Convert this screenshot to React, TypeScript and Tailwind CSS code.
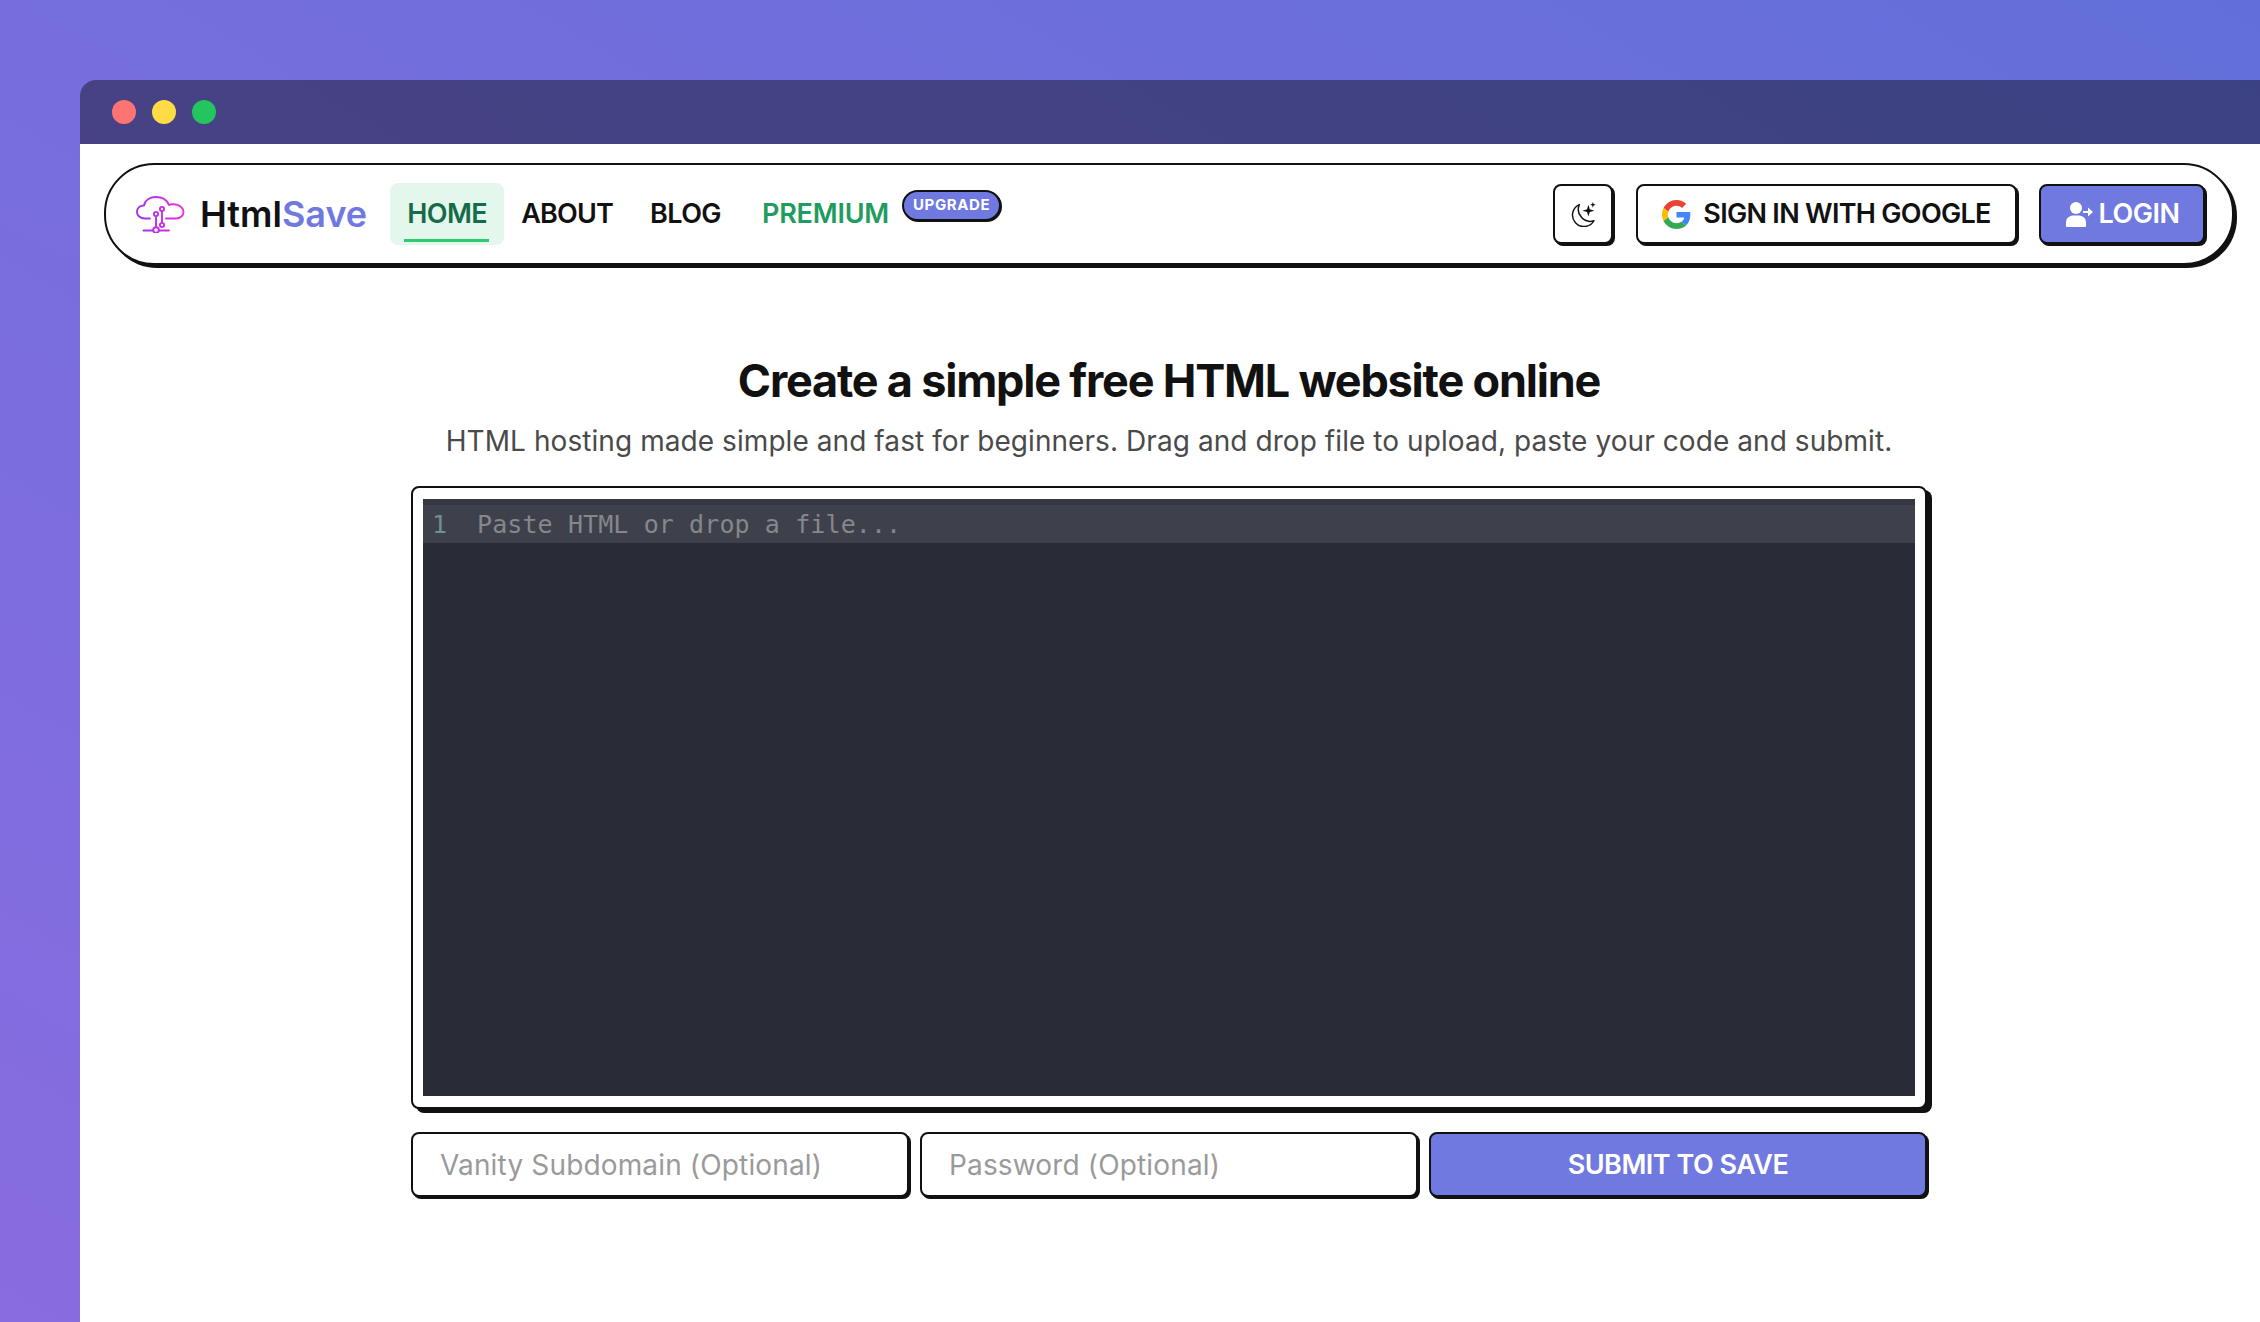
import React from "react";

const sans = "font-['Inter','Noto_Sans',sans-serif]";

const Logo = () => (
  <svg width="49" height="37" viewBox="0 0 49 37" fill="none" strokeWidth="1.9">
    <defs>
      <linearGradient id="logoGrad" x1="0" y1="0" x2="49" y2="0" gradientUnits="userSpaceOnUse">
        <stop offset="0" stopColor="#9b30f0" />
        <stop offset="1" stopColor="#f02fd8" />
      </linearGradient>
    </defs>
    <g stroke="url(#logoGrad)" strokeLinecap="round" strokeLinejoin="round">
      <path d="M14 22.500H9C4 22.500 1 19.500 1 16C1 12 4 9.500 8 9.500C9 4 14 1 20 1C26 1 31 4 33 9C35 8 36 8 38 8.300C43.500 8.500 47.500 12 47.500 16C47.500 19.500 44.500 22.500 40 22.500H30" />
      <path d="M20 20V31M26 15V27" />
      <circle cx="20" cy="18" r="2.100" fill="white" />
      <circle cx="26" cy="13" r="2.100" fill="white" />
      <circle cx="26" cy="29" r="2.100" fill="white" />
      <circle cx="20" cy="34" r="2.800" fill="white" />
      <path d="M7.500 34.500H17M23 34.500H33" />
    </g>
  </svg>
);

const MoonStars = () => (
  <svg width="25" height="25" viewBox="0 0 24 24" fill="none" stroke="#111" strokeWidth="1.4" strokeLinejoin="round">
    <path d="M8 2.500A11 11 0 1 0 22 18A11.500 11.500 0 0 1 8 2.500Z" />
    <path fill="#111" stroke="none" d="M16.700 2.600L18 7L22.400 8.300L18 9.600L16.700 14L15.400 9.600L11 8.300L15.400 7Z" />
    <path fill="#111" stroke="none" d="M21 0L21.700 2L23.700 2.700L21.700 3.400L21 5.400L20.300 3.400L18.300 2.700L20.300 2Z" />
  </svg>
);

const GoogleG = () => (
  <svg width="29" height="29" viewBox="0 0 48 48">
    <path fill="#EA4335" d="M24 9.500c3.500 0 6.700 1.200 9.200 3.600l6.900-6.900C35.900 2.400 30.500 0 24 0 14.600 0 6.500 5.400 2.600 13.200l8 6.200C12.500 13.600 17.800 9.500 24 9.500z" />
    <path fill="#4285F4" d="M46.900 24.500c0-1.600-.1-3.100-.4-4.500H24v9h12.900c-.6 3-2.200 5.500-4.700 7.200l7.700 6c4.500-4.200 7-10.300 7-17.700z" />
    <path fill="#FBBC05" d="M10.500 28.600c-.5-1.400-.8-3-.8-4.600s.3-3.200.8-4.600l-8-6.200C.9 16.400 0 20.100 0 24s.9 7.600 2.600 10.800l7.900-6.200z" />
    <path fill="#34A853" d="M24 48c6.500 0 11.900-2.100 15.900-5.800l-7.700-6c-2.200 1.400-4.900 2.300-8.200 2.300-6.200 0-11.500-4.100-13.400-9.900l-8 6.200C6.500 42.600 14.600 48 24 48z" />
  </svg>
);

const UserArrow = () => (
  <svg width="28" height="25" viewBox="0 0 28 25" fill="white">
    <circle cx="11" cy="6" r="6" />
    <path d="M1 25V20.500C1 16 4.500 13.500 9 13.500H13C17.500 13.500 21 16 21 20.500V25Z" />
    <path d="M18 9H23V5.500L28 10L23 14.500V11H18Z" />
  </svg>
);

const Field = ({ placeholder, type = "text" }: { placeholder: string; type?: string }) => (
  <input
    type={type}
    placeholder={placeholder}
    className="h-full w-full rounded-lg border-2 border-[#111] bg-white px-[27px] text-[28px] tracking-[0.15px] text-[#111] shadow-[2px_2px_0_#111] outline-none placeholder:text-[#9a9a9a]"
  />
);

export default function App() {
  return (
    <div className={`h-screen overflow-hidden bg-linear-to-tr from-[#886ce0] to-[#626fda] pl-[80px] pt-[80px] ${sans}`}>
      <div className="flex h-full flex-col">
        {/* Window bar */}
        <div className="flex h-[64px] shrink-0 items-center gap-4 rounded-tl-2xl bg-black/40 pl-8">
          <span className="h-6 w-6 rounded-full bg-[#ff7373]" />
          <span className="h-6 w-6 rounded-full bg-[#ffdc45]" />
          <span className="h-6 w-6 rounded-full bg-[#22c55e]" />
        </div>

        <div className="flex-1 bg-white pl-6 pr-[26px] pt-[19px]">
          {/* Navbar */}
          <nav className="flex h-[102px] items-center justify-between rounded-[50px] border-2 border-[#111] bg-white pl-[30px] pr-[27px] shadow-[3px_3px_0_#111]">
            <div className="flex items-center">
              <Logo />
              <a className="ml-[15px] text-[36px] font-semibold text-[#111]">
                Html<span className="text-[#7079e0]">Save</span>
              </a>
              <a className="relative ml-[23px] flex h-[62px] w-[114px] items-center justify-center rounded-lg bg-[#e4f7ec] text-[27px] font-semibold tracking-[-0.6px] text-[#166b4a]">
                HOME
                <span className="absolute bottom-[3px] left-[14px] h-[3px] w-[85px] bg-[#2ecc71]" />
              </a>
              <a className="ml-[17px] text-[27px] font-semibold tracking-[-0.8px] text-[#111]">ABOUT</a>
              <a className="ml-[37px] text-[27px] font-semibold tracking-[-0.6px] text-[#111]">BLOG</a>
              <a className="ml-[41px] text-[27px] font-semibold tracking-[-0.2px] text-[#1f9d5f]">PREMIUM</a>
              <span className="mb-[17px] ml-[13px] flex h-[31px] w-[99px] items-center justify-center rounded-full border-2 border-[#111] bg-[#7079e0] text-[15px] font-bold tracking-[0.6px] text-white shadow-[1px_1px_0_#111]">
                UPGRADE
              </span>
            </div>

            <div className="flex items-center gap-[22px]">
              <button className="mr-[1px] flex h-[60px] w-[60px] items-center justify-center rounded-lg border-2 border-[#111] bg-white shadow-[2px_2px_0_#111]">
                <MoonStars />
              </button>
              <button className="flex h-[60px] w-[381px] items-center justify-center gap-[12px] rounded-lg border-2 border-[#111] bg-white text-[27px] font-semibold tracking-[-0.7px] text-[#111] shadow-[2px_2px_0_#111]">
                <GoogleG />
                SIGN IN WITH GOOGLE
              </button>
              <button className="flex h-[60px] w-[166px] items-center justify-center gap-[6px] rounded-lg border-2 border-[#111] bg-[#7079e0] text-[27px] font-semibold tracking-[-0.5px] text-white shadow-[2px_2px_0_#111]">
                <UserArrow />
                LOGIN
              </button>
            </div>
          </nav>

          {/* Main */}
          <main className="flex flex-col items-center pt-[86px]">
            <h1 className="text-[45px] font-bold leading-[60px] tracking-[-1.2px] text-[#111]">
              Create a simple free HTML website online
            </h1>
            <p className="mt-[10px] text-[28px] leading-[40px] tracking-[0.07px] text-[#4a4a4a]">
              HTML hosting made simple and fast for beginners. Drag and drop file to upload, paste your code and submit.
            </p>

            <div className="mt-[25px] h-[623px] w-[1516px] rounded-lg border-2 border-[#111] bg-white px-[10px] py-[11px] shadow-[5px_4px_0_#111]">
              <div className="h-full bg-[#292c37] pt-[6px] font-['DejaVu_Sans_Mono',monospace] text-[25px] tracking-[0.1px] shadow-[inset_0_6px_0_#353842]">
                <div className="flex h-[38px] items-center bg-[#3e414c] pt-[2px]">
                  <span className="ml-[9px] w-[45px] text-[#6b9090]">1</span>
                  <span className="text-[#85878b]">Paste HTML or drop a file...</span>
                </div>
              </div>
            </div>

            <div className="mt-[23px] grid h-[65px] w-[1516px] grid-cols-3 gap-[11px]">
              <Field placeholder="Vanity Subdomain (Optional)" />
              <Field placeholder="Password (Optional)" type="password" />
              <button className="rounded-lg border-2 border-[#111] bg-[#7079e0] pt-[2px] text-[27px] font-semibold tracking-[-0.5px] text-white shadow-[2px_2px_0_#111]">
                SUBMIT TO SAVE
              </button>
            </div>
          </main>
        </div>
      </div>
    </div>
  );
}
